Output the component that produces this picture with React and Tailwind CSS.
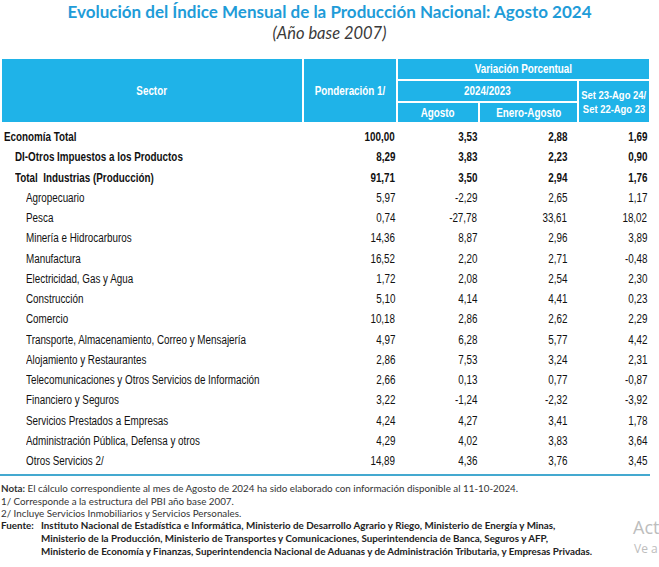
const rows = [
  { name: 'Economía Total', pond: '100,00', ago: '3,53', ene: '2,88', set: '1,69', level: 0 },
  { name: 'DI-Otros Impuestos a los Productos', pond: '8,29', ago: '3,83', ene: '2,23', set: '0,90', level: 1 },
  { name: 'Total  Industrias (Producción)', pond: '91,71', ago: '3,50', ene: '2,94', set: '1,76', level: 1 },
  { name: 'Agropecuario', pond: '5,97', ago: '-2,29', ene: '2,65', set: '1,17', level: 2 },
  { name: 'Pesca', pond: '0,74', ago: '-27,78', ene: '33,61', set: '18,02', level: 2 },
  { name: 'Minería e Hidrocarburos', pond: '14,36', ago: '8,87', ene: '2,96', set: '3,89', level: 2 },
  { name: 'Manufactura', pond: '16,52', ago: '2,20', ene: '2,71', set: '-0,48', level: 2 },
  { name: 'Electricidad, Gas y Agua', pond: '1,72', ago: '2,08', ene: '2,54', set: '2,30', level: 2 },
  { name: 'Construcción', pond: '5,10', ago: '4,14', ene: '4,41', set: '0,23', level: 2 },
  { name: 'Comercio', pond: '10,18', ago: '2,86', ene: '2,62', set: '2,29', level: 2 },
  { name: 'Transporte, Almacenamiento, Correo y Mensajería', pond: '4,97', ago: '6,28', ene: '5,77', set: '4,42', level: 2 },
  { name: 'Alojamiento y Restaurantes', pond: '2,86', ago: '7,53', ene: '3,24', set: '2,31', level: 2 },
  { name: 'Telecomunicaciones y Otros Servicios de Información', pond: '2,66', ago: '0,13', ene: '0,77', set: '-0,87', level: 2 },
  { name: 'Financiero y Seguros', pond: '3,22', ago: '-1,24', ene: '-2,32', set: '-3,92', level: 2 },
  { name: 'Servicios Prestados a Empresas', pond: '4,24', ago: '4,27', ene: '3,41', set: '1,78', level: 2 },
  { name: 'Administración Pública, Defensa y otros', pond: '4,29', ago: '4,02', ene: '3,83', set: '3,64', level: 2 },
  { name: 'Otros Servicios 2/', pond: '14,89', ago: '4,36', ene: '3,76', set: '3,45', level: 2 },
];

const arial = "font-['Liberation_Sans',Arial,sans-serif]";
const calibri = "font-['Lato','Open_Sans',sans-serif]";

// Arial Narrow is not installed: squeeze Liberation Sans to its width
const Narrow = ({ children, align = 'left' }) => (
  <span
    className={`inline-block whitespace-pre scale-x-[0.82] ${
      align === 'right' ? 'origin-right' : align === 'center' ? 'origin-center' : 'origin-left'
    }`}
  >
    {children}
  </span>
);

const HeadCell = ({ className = '', children }) => (
  <div className={`bg-[#1fb3e8] flex items-center justify-center ${className}`}>{children}</div>
);

const App = () => {
  return (
    <div className="relative w-[659px] h-[567px] bg-white overflow-hidden">
      {/* title */}
      <div className="pt-[1px] text-center">
        <h1 className={`${calibri} text-[17px] leading-[22px] font-bold text-[#1f9cd8]`}>
          Evolución del Índice Mensual de la Producción Nacional: Agosto 2024
        </h1>
        <p className={`${calibri} italic text-[16.5px] leading-[20px] text-[#3a3a3a]`}>(Año base 2007)</p>
      </div>

      {/* header */}
      <div className={`${arial} ml-[2px] mt-[16px] grid grid-cols-[300px_92px_80px_97px_70px] grid-rows-[20px_20px_19px] gap-[2px] text-white font-bold text-[12px]`}>
        <HeadCell className="row-span-3"><Narrow align="center">Sector</Narrow></HeadCell>
        <HeadCell className="row-span-3"><Narrow align="center">Ponderación 1/</Narrow></HeadCell>
        <HeadCell className="col-span-3"><Narrow align="center">Variación Porcentual</Narrow></HeadCell>
        <HeadCell className="col-span-2"><Narrow align="center">2024/2023</Narrow></HeadCell>
        <HeadCell className="row-span-2 flex-col justify-around text-[11.5px] leading-[14px] py-[3px]">
          <Narrow align="center">Set 23-Ago 24/</Narrow>
          <Narrow align="center">Set 22-Ago 23</Narrow>
        </HeadCell>
        <HeadCell><Narrow align="center">Agosto</Narrow></HeadCell>
        <HeadCell><Narrow align="center">Enero-Agosto</Narrow></HeadCell>
      </div>

      {/* body */}
      <div className={`${arial} ml-[2px] mt-[5px] text-[12px] leading-[14px] text-[#111]`}>
        {rows.map((r) => (
          <div
            key={r.name}
            className={`grid grid-cols-[300px_92px_80px_97px_70px] gap-[2px] h-[20.25px] items-center ${r.level < 2 ? 'font-bold' : ''}`}
          >
            <span className={r.level === 0 ? 'pl-[2px]' : r.level === 1 ? 'pl-[13px]' : 'pl-[24px]'}>
              <Narrow>{r.name}</Narrow>
            </span>
            <span className="text-right pr-[1px]"><Narrow align="right">{r.pond}</Narrow></span>
            <span className="text-right pr-[1px]"><Narrow align="right">{r.ago}</Narrow></span>
            <span className="text-right pr-[10px]"><Narrow align="right">{r.ene}</Narrow></span>
            <span className="text-right pr-[2px]"><Narrow align="right">{r.set}</Narrow></span>
          </div>
        ))}
      </div>
      <div className="mt-[3px] w-[650px] h-[2px] bg-[#44a9d0]" />

      {/* notes */}
      <div className={`${calibri} mt-[6px] pl-[1px] text-[9.8px] leading-[12.4px] text-[#333]`}>
        <p><span className="font-bold">Nota:</span> El cálculo correspondiente al mes de Agosto de 2024 ha sido elaborado con información disponible al 11-10-2024.</p>
        <p>1/ Corresponde a la estructura del PBI año base 2007.</p>
        <p>2/ Incluye Servicios Inmobiliarios y Servicios Personales.</p>
        <div className="flex font-bold text-[#222] leading-[12.8px]">
          <span className="w-[40px] shrink-0">Fuente:</span>
          <div>
            <p>Instituto Nacional de Estadística e Informática, Ministerio de Desarrollo Agrario y Riego, Ministerio de Energía y Minas,</p>
            <p>Ministerio de la Producción, Ministerio de Transportes y Comunicaciones, Superintendencia de Banca, Seguros y AFP,</p>
            <p>Ministerio de Economía y Finanzas, Superintendencia Nacional de Aduanas y de Administración Tributaria, y Empresas Privadas.</p>
          </div>
        </div>
      </div>

      {/* activation watermark, only its visible start */}
      <div className="absolute left-[633px] top-[516px] font-['Open_Sans',sans-serif] text-[#bdbdbd] whitespace-nowrap">
        <div className="text-[18px] leading-[22px]">Act</div>
        <div className="mt-[3px] text-[12px] leading-[16px] pl-[1px]">Ve a</div>
      </div>
    </div>
  );
};

export default App;
